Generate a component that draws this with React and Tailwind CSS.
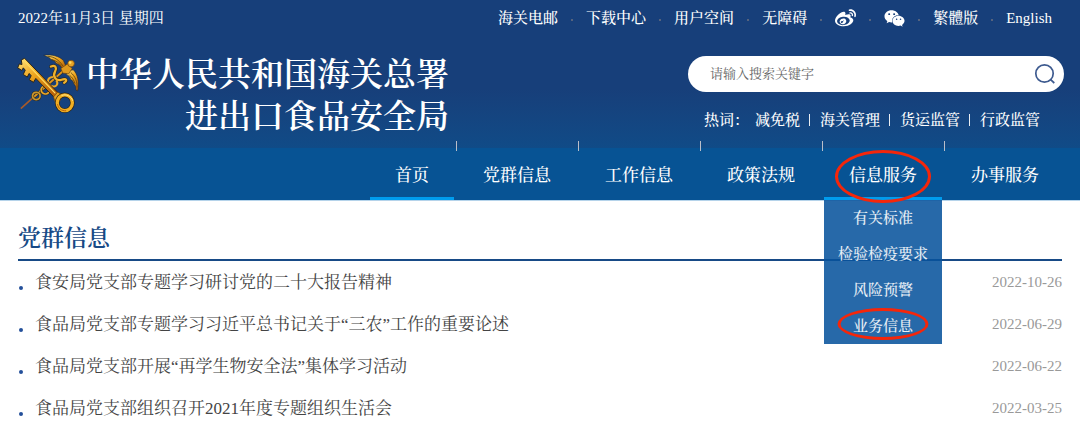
import { Fragment } from "react";
import { FaWeibo, FaWeixin } from "react-icons/fa";

const topLinks = [
  { label: "海关电邮" },
  { label: "下载中心" },
  { label: "用户空间" },
  { label: "无障碍" },
  { label: "微博", Icon: FaWeibo },
  { label: "微信", Icon: FaWeixin },
  { label: "繁體版" },
  { label: "English" },
];

const hotWords = ["减免税", "海关管理", "货运监管", "行政监管"];

const navItems = [
  { label: "党群信息" },
  { label: "工作信息" },
  { label: "政策法规" },
  {
    label: "信息服务",
    circled: true,
    menu: [
      { label: "有关标准" },
      { label: "检验检疫要求" },
      { label: "风险预警" },
      { label: "业务信息", circled: true },
    ],
  },
  { label: "办事服务" },
];

const news = [
  { title: "食安局党支部专题学习研讨党的二十大报告精神", date: "2022-10-26" },
  { title: "食品局党支部专题学习习近平总书记关于“三农”工作的重要论述", date: "2022-06-29" },
  { title: "食品局党支部开展“再学生物安全法”集体学习活动", date: "2022-06-22" },
  { title: "食品局党支部组织召开2021年度专题组织生活会", date: "2022-03-25" },
];

function CustomsEmblem() {
  return (
    <svg viewBox="22 20 190 182" className="h-15 w-16 shrink-0" fill="none" aria-hidden="true">
      <defs>
        <linearGradient id="gold" x1="0" y1="0" x2="0.6" y2="1">
          <stop offset="0" stopColor="#ffe27a" />
          <stop offset="0.5" stopColor="#eda31c" />
          <stop offset="1" stopColor="#b8620a" />
        </linearGradient>
      </defs>
      {/* Winged staff */}
      <path d="M104 24 C126 20 152 26 164 40 L172 58 L162 68 C156 56 148 50 140 48 C142 42 130 38 124 36 C126 32 114 28 104 24Z" fill="url(#gold)" stroke="#20293a" strokeWidth="2" />
      <path d="M116 27 C136 28 150 38 162 56 M128 37 C142 40 152 48 158 58" stroke="#59420f" strokeWidth="2.5" />
      <path d="M178 70 L194 68 C208 82 212 106 207 132 L202 130 C202 122 200 114 196 112 C194 104 190 98 186 98 C184 88 178 84 172 82Z" fill="url(#gold)" stroke="#20293a" strokeWidth="2" />
      <path d="M186 76 C200 88 206 104 205 122 M182 84 C190 90 196 100 199 110" stroke="#59420f" strokeWidth="2.5" />
      <path d="M36 184 L70 154" stroke="#a75a2b" strokeWidth="5" strokeLinecap="round" />
      <path d="M68 156 L178 58" stroke="#2b2a24" strokeWidth="9" />
      <path d="M68 156 L178 58" stroke="#dc9420" strokeWidth="6" />
      <path d="M126 58 C142 52 144 64 138 74 C130 88 142 104 158 98 C174 92 176 102 166 107" stroke="#2b2a24" strokeWidth="11" strokeLinecap="round" />
      <path d="M126 58 C142 52 144 64 138 74 C130 88 142 104 158 98 C174 92 176 102 166 107" stroke="#f0b12c" strokeWidth="7" strokeLinecap="round" />
      <path d="M132 90 C112 92 112 112 130 118 C142 122 150 110 142 100" stroke="#eda824" strokeWidth="6" />
      <path d="M96 128 C98 114 120 116 120 132 C118 146 98 144 96 128Z" stroke="#2b2a24" strokeWidth="8" />
      <path d="M96 128 C98 114 120 116 120 132 C118 146 98 144 96 128Z" stroke="#e8a628" strokeWidth="5" />
      <path d="M70 146 C72 132 94 134 93 148 C91 162 70 162 70 146Z" stroke="#2b2a24" strokeWidth="8" />
      <path d="M70 146 C72 132 94 134 93 148 C91 162 70 162 70 146Z" stroke="#c9952c" strokeWidth="5" />
      <path d="M156 64 L176 50 L190 64 L180 80 L162 78Z" fill="#e09a1e" stroke="#6b420d" strokeWidth="2" />
      <circle cx="187" cy="49" r="10" fill="#e9a326" stroke="#6b420d" strokeWidth="2" />
      <circle cx="184" cy="46" r="4" fill="#ffdc62" />
      {/* Key */}
      <path d="M36 38 L46 33 L150 140 L138 154 L80 94 L73 106 L60 98 L66 86 L60 79 L54 90 L42 82 L48 69 L42 62 L38 70 L25 62 L30 50 L38 52Z" fill="url(#gold)" stroke="#2b2418" strokeWidth="3" strokeLinejoin="round" />
      <path d="M44 40 L138 138" stroke="#ffdc62" strokeWidth="4" strokeLinecap="round" />
      <path d="M134 150 L146 136 L162 144 L150 168 L138 164Z" fill="#e6a01e" stroke="#6b420d" strokeWidth="2" />
      <ellipse cx="168" cy="168" rx="23" ry="24" stroke="#2b2418" strokeWidth="14" />
      <ellipse cx="168" cy="168" rx="23" ry="24" stroke="#f0ae22" strokeWidth="10" />
      <path d="M146 172 C148 186 158 193 172 192" stroke="#b8620a" strokeWidth="3" />
      <path d="M158 146 C172 140 188 148 192 162" stroke="#ffe68a" strokeWidth="3" />
    </svg>
  );
}

function SearchIcon() {
  return (
    <svg viewBox="0 0 22 22" className="size-[22px]" fill="none" stroke="#3d5a8f" strokeWidth="1.7" aria-hidden="true">
      <circle cx="10.5" cy="10.5" r="8.7" />
      <path d="M16.6 16.6 L20.3 20" />
    </svg>
  );
}

function RedRing({ className }) {
  return (
    <span
      aria-hidden="true"
      className={`pointer-events-none absolute left-1/2 z-10 -translate-x-1/2 rounded-[50%] border-[#f5260a] ${className}`}
    />
  );
}

function TopBar() {
  return (
    <div className="flex items-center justify-between pr-7 pl-[18px] pt-1.5 text-[15px] leading-6">
      <time dateTime="2022-11-03">2022年11月3日 星期四</time>
      <ul className="flex items-center font-medium">
        {topLinks.map(({ label, Icon }, i) => (
          <Fragment key={label}>
            {i > 0 && (
              <li aria-hidden="true" className="flex w-7 justify-center pt-1">
                <span className="size-0.5 rounded-full bg-[#6b7080]" />
              </li>
            )}
            <li>
              <a href="#" aria-label={label} className="block">
                {Icon ? <Icon className="size-[21px]" /> : label}
              </a>
            </li>
          </Fragment>
        ))}
      </ul>
    </div>
  );
}

function Masthead() {
  return (
    <div className="flex items-start justify-between pt-6 pr-4 pb-2.5 pl-4">
      <a href="#" className="flex items-start gap-1.5">
        <CustomsEmblem />
        <h1 className="text-right text-[33px] leading-[42px] font-semibold">
          中华人民共和国海关总署
          <br />
          进出口食品安全局
        </h1>
      </a>
      <div className="flex w-[376px] flex-col gap-4 pt-0.5">
        <form role="search" className="flex h-9 items-center rounded-full bg-white pr-2 pl-[22px]">
          <input
            type="search"
            aria-label="搜索"
            placeholder="请输入搜索关键字"
            className="min-w-0 flex-1 bg-transparent text-[13px] text-gray-800 outline-none placeholder:text-[#666]"
          />
          <button type="submit" aria-label="提交搜索">
            <SearchIcon />
          </button>
        </form>
        <div className="flex items-center justify-end pr-6 text-[15px] leading-6 font-medium">
          <span className="pr-1.5">热词：</span>
          {hotWords.map((word, i) => (
            <Fragment key={word}>
              {i > 0 && (
                <span aria-hidden="true" className="flex w-5 justify-center">
                  <span className="h-3 w-px bg-white/90" />
                </span>
              )}
              <a href="#">{word}</a>
            </Fragment>
          ))}
        </div>
      </div>
    </div>
  );
}

function MainNav() {
  return (
    <nav className="border-b border-[#b5d3ea] bg-[#075394] pr-3.5 text-[17px] font-medium">
      <ul className="flex justify-end">
        <li className="w-[86px]">
          <a href="#" className="mr-0.5 block border-b-3 border-[#009cee] pt-1.5 text-center leading-[43px]">
            首页
          </a>
        </li>
        {navItems.map(({ label, menu, circled }) => (
          <li key={label} className="relative max-w-[122px] flex-1">
            <span aria-hidden="true" className="absolute -top-[7px] left-0 h-2.5 w-px bg-[#b9bec9]" />
            <a
              href="#"
              className={`mx-0.5 block border-b-3 pt-1.5 text-center leading-[43px] ${menu ? "border-[#009cee]" : "border-transparent"}`}
            >
              {label}
            </a>
            {circled && <RedRing className="top-0.5 h-[53px] w-24 border-3" />}
            {menu && (
              <ul className="absolute inset-x-0.5 top-full bg-[#07539c]/87 text-center text-[15px] leading-9 text-white/90">
                {menu.map((entry) => (
                  <li key={entry.label} className="relative">
                    <a href="#" className="block">
                      {entry.label}
                    </a>
                    {entry.circled && <RedRing className="top-0 h-8 w-[91px] border-3" />}
                  </li>
                ))}
              </ul>
            )}
          </li>
        ))}
      </ul>
    </nav>
  );
}

export default function App() {
  return (
    <div
      lang="zh-CN"
      className="bg-white font-['Liberation_Serif','Noto_Serif_CJK_SC','Noto_Sans_CJK_SC',serif]"
    >
      <header className="text-white">
        <div className="bg-linear-to-b from-[#173f7a] from-60% to-[#104b87]">
          <TopBar />
          <Masthead />
        </div>
        <MainNav />
      </header>
      <main className="px-[18px] pt-[22px]">
        <h2 className="border-b-2 border-[#174a86] pb-1 text-[23px] leading-8 font-semibold text-[#174a86]">
          党群信息
        </h2>
        <ul className="pt-px">
          {news.map(({ title, date }) => (
            <li key={date} className="flex h-[42px] items-center gap-3 text-[17px] text-[#444]">
              <span aria-hidden="true" className="mt-2.5 ml-px size-1 shrink-0 rounded-full bg-[#24509a]" />
              <a href="#" className="flex-1">
                {title}
              </a>
              <time dateTime={date} className="pb-0.5 text-[15px] text-[#999]">
                {date}
              </time>
            </li>
          ))}
        </ul>
      </main>
    </div>
  );
}
